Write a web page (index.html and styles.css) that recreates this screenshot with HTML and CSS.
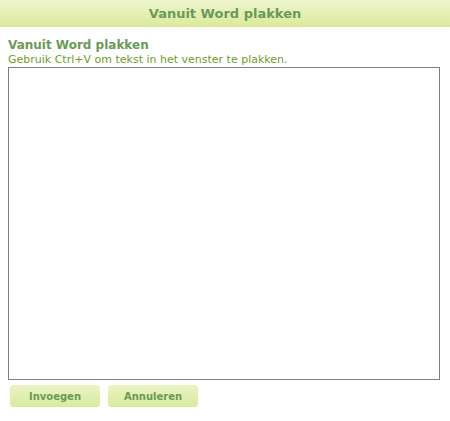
FILE: index.html
```html
<!DOCTYPE html>
<html>
<head>
<meta charset="utf-8">
<link rel="stylesheet" href="styles.css">
</head>
<body>
<div class="header">Vanuit Word plakken</div>
<div class="content">
  <div class="title">Vanuit Word plakken</div>
  <div class="hint">Gebruik Ctrl+V om tekst in het venster te plakken.</div>
  <div class="pastebox"></div>
  <div class="buttons">
    <button class="btn">Invoegen</button>
    <button class="btn">Annuleren</button>
  </div>
</div>
</body>
</html>
```
FILE: styles.css
```css
html, body {
  margin: 0;
  padding: 0;
  background: #ffffff;
  font-family: "DejaVu Sans", Verdana, sans-serif;
}
.header {
  height: 27px;
  line-height: 27px;
  text-align: center;
  font-size: 13px;
  font-weight: bold;
  color: #6b9a58;
  background: linear-gradient(#eef5cd, #dbe99c);
}
.content {
  padding: 11px 10px 0 8px;
}
.title {
  font-size: 12px;
  font-weight: bold;
  color: #6b9a58;
  line-height: 15px;
}
.hint {
  font-size: 11px;
  color: #6e9e2c;
  line-height: 13px;
}
.pastebox {
  width: 430px;
  height: 311px;
  border: 1px solid #7f7f7f;
  margin-top: 1px;
}
.buttons {
  display: flex;
  gap: 8px;
  margin-top: 5px;
  padding-left: 2px;
}
.btn {
  width: 90px;
  height: 22px;
  border: none;
  border-radius: 3px;
  background: linear-gradient(#eaf4c4, #d9ea9c);
  color: #6b9a58;
  font-family: "DejaVu Sans", Verdana, sans-serif;
  font-size: 10px;
  font-weight: bold;
  padding: 0;
}
```
